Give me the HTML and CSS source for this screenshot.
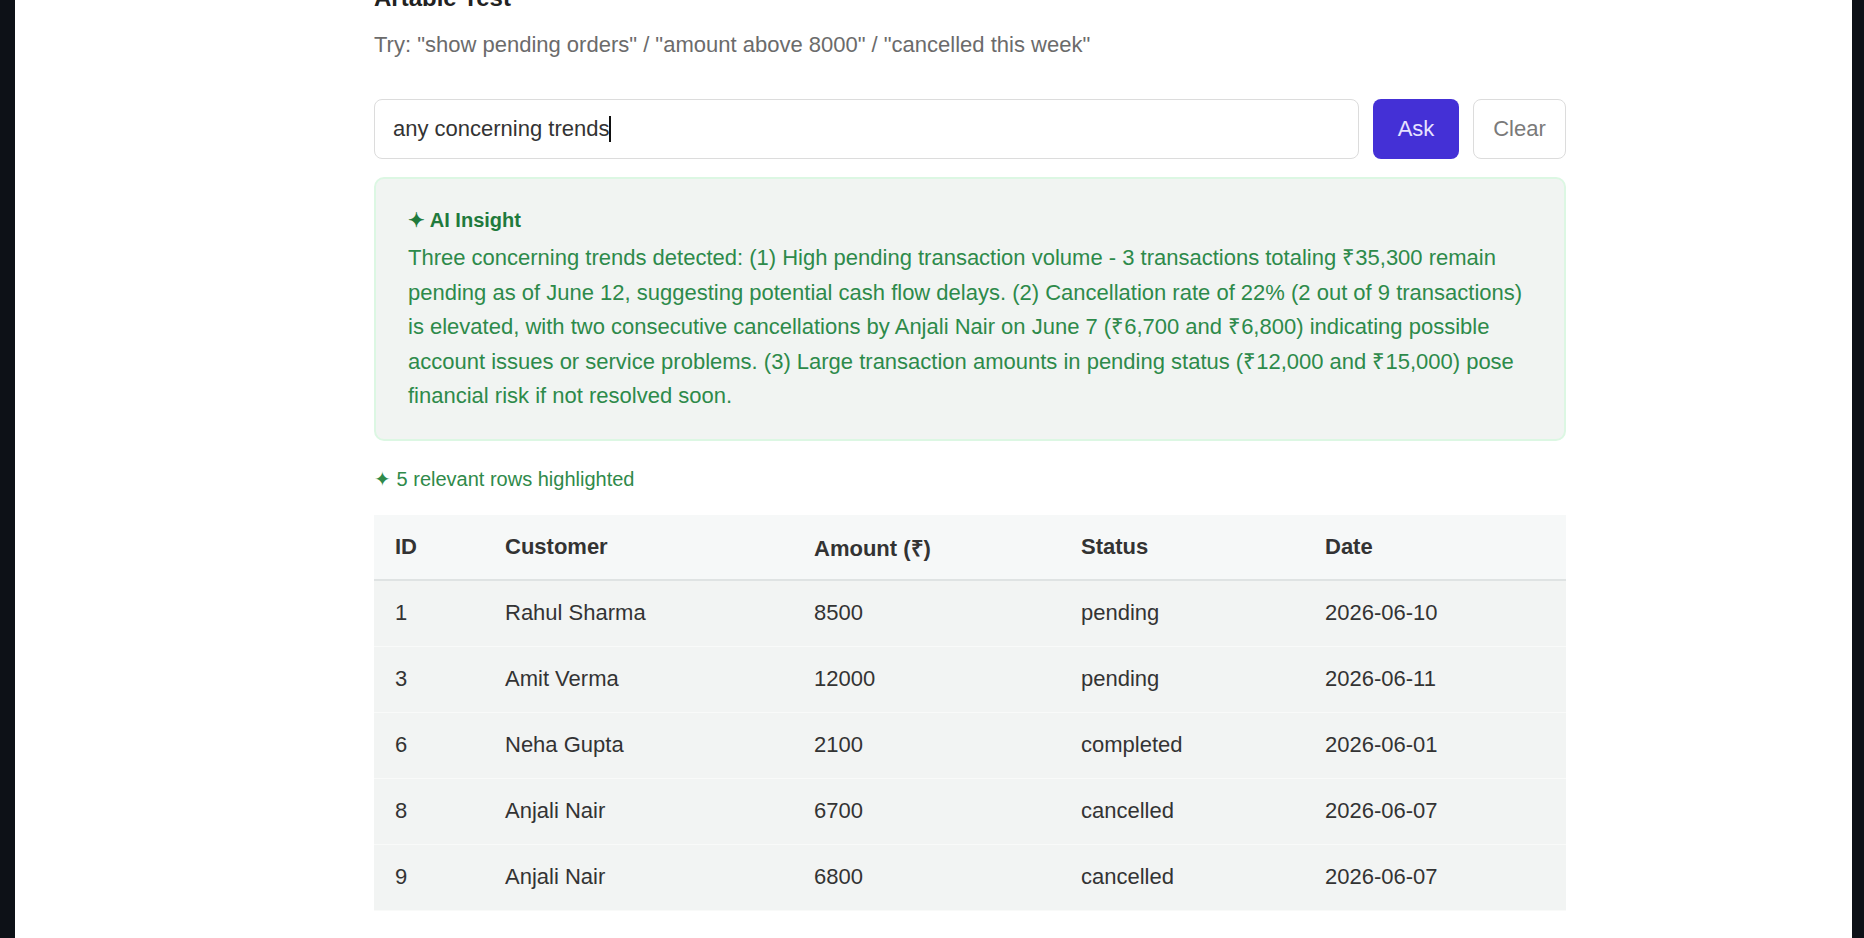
FILE: index.html
```html
<!DOCTYPE html>
<html lang="en">
<head>
    <meta charset="UTF-8">
    <meta name="viewport" content="width=device-width, initial-scale=1.0">
    <title>Artable Test</title>
    <link rel="stylesheet" href="styles.css">
</head>
<body>
    <div class="frame">
        <main class="page">
            <h2 class="title">Artable Test</h2>
            <p class="hint">Try: "show pending orders" / "amount above 8000" / "cancelled this week"</p>

            <div class="ask-bar">
                <div class="query" role="textbox">any concerning trends<span class="caret"></span></div>
                <button class="btn btn-ask">Ask</button>
                <button class="btn btn-clear">Clear</button>
            </div>

            <div class="insight">
                <div class="insight-title">&#10022; AI Insight</div>
                <p class="insight-text">Three concerning trends detected: (1) High pending transaction volume - 3 transactions totaling ₹35,300 remain pending as of June 12, suggesting potential cash flow delays. (2) Cancellation rate of 22% (2 out of 9 transactions) is elevated, with two consecutive cancellations by Anjali Nair on June 7 (₹6,700 and ₹6,800) indicating possible account issues or service problems. (3) Large transaction amounts in pending status (₹12,000 and ₹15,000) pose financial risk if not resolved soon.</p>
            </div>

            <div class="highlight-note">&#10022; 5 relevant rows highlighted</div>

            <table class="data-table">
                <thead>
                    <tr>
                        <th class="col-id">ID</th>
                        <th class="col-customer">Customer</th>
                        <th class="col-amount">Amount (₹)</th>
                        <th class="col-status">Status</th>
                        <th>Date</th>
                    </tr>
                </thead>
                <tbody>
                    <tr class="hit"><td>1</td><td>Rahul Sharma</td><td>8500</td><td>pending</td><td>2026-06-10</td></tr>
                    <tr class="hit"><td>3</td><td>Amit Verma</td><td>12000</td><td>pending</td><td>2026-06-11</td></tr>
                    <tr class="hit"><td>6</td><td>Neha Gupta</td><td>2100</td><td>completed</td><td>2026-06-01</td></tr>
                    <tr class="hit"><td>8</td><td>Anjali Nair</td><td>6700</td><td>cancelled</td><td>2026-06-07</td></tr>
                    <tr class="hit"><td>9</td><td>Anjali Nair</td><td>6800</td><td>cancelled</td><td>2026-06-07</td></tr>
                </tbody>
            </table>
        </main>
    </div>
</body>
</html>
```

FILE: styles.css
```css
html, body {
    height: 100%;
}
body {
    margin: 0;
    background: #0d1117;
    font-family: "Liberation Sans", Arial, sans-serif;
    color: #333;
    overflow: hidden;
}
.frame {
    margin: 0 12px 0 15px;
    height: 100%;
    background: #fff;
    overflow: hidden;
}
.page {
    width: 1192px;
    margin-left: 359px;
    margin-top: -17px;
}
.title {
    margin: 0;
    font-size: 24px;
    line-height: 29px;
    color: #222;
}
.hint {
    margin: 20px 0 0;
    font-size: 22px;
    line-height: 26px;
    color: #6b6b6b;
}
.ask-bar {
    display: flex;
    gap: 14px;
    margin-top: 41px;
    height: 60px;
}
.query {
    flex: 1;
    display: flex;
    align-items: center;
    padding: 0 18px;
    border: 1px solid #dcdcdc;
    border-radius: 8px;
    font-size: 22px;
    color: #333;
}
.caret {
    display: inline-block;
    width: 2px;
    height: 26px;
    background: #111;
}
.btn {
    font-family: inherit;
    font-size: 22px;
    border-radius: 8px;
    cursor: pointer;
}
.btn-ask {
    width: 86px;
    background: #4430d6;
    border: none;
    color: #e6e2ff;
}
.btn-clear {
    width: 93px;
    background: #fff;
    border: 1px solid #dcdcdc;
    color: #7a7a7a;
}
.insight {
    margin-top: 18px;
    padding: 29px 32px 25px;
    background: #f1f4f2;
    border: 2px solid #dcf7e3;
    border-radius: 10px;
    color: #2d8a4a;
}
.insight-title {
    font-size: 20px;
    font-weight: bold;
    line-height: 24px;
    color: #1f7a3c;
}
.insight-text {
    margin: 9px 0 0;
    font-size: 22px;
    line-height: 34.5px;
}
.highlight-note {
    margin-top: 26px;
    font-size: 20px;
    line-height: 24px;
    color: #2f8a4a;
}
.data-table {
    width: 100%;
    margin-top: 24px;
    border-collapse: collapse;
    font-size: 22px;
    color: #333;
}
.data-table th {
    height: 64px;
    padding: 0 21px;
    text-align: left;
    background: #f6f8f8;
    border-bottom: 2px solid #dfe3e3;
    color: #333;
}
.data-table td {
    height: 65px;
    padding: 0 21px;
    border-bottom: 1px solid #f9faf9;
}
.data-table tr.hit td {
    background: #f2f4f3;
}
.col-id { width: 68px; }
.col-customer { width: 267px; }
.col-amount { width: 225px; }
.col-status { width: 202px; }
```
